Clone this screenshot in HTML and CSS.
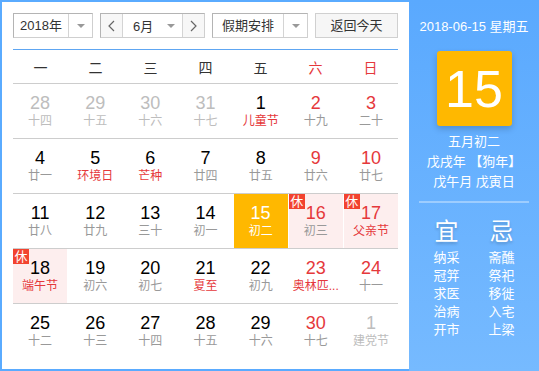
FILE: index.html
```html
<!DOCTYPE html>
<html lang="zh-CN">
<head>
  <meta charset="UTF-8">
  <title>万年历</title>
  <link rel="stylesheet" href="styles.css">
</head>
<body>
  <div class="calendar">
    <div class="main">
      <div class="toolbar">
        <div class="select year">
          <span class="select-text">2018年</span>
          <span class="select-btn"><i class="caret"></i></span>
        </div>
        <div class="select month">
          <span class="nav nav-prev">
            <svg width="7" height="12" viewBox="0 0 7 12"><polyline points="6,1 1,6 6,11" fill="none" stroke="#666" stroke-width="1.2"/></svg>
          </span>
          <span class="month-text">6月<i class="caret"></i></span>
          <span class="nav">
            <svg width="7" height="12" viewBox="0 0 7 12"><polyline points="1,1 6,6 1,11" fill="none" stroke="#666" stroke-width="1.2"/></svg>
          </span>
        </div>
        <div class="select holiday">
          <span class="select-text">假期安排</span>
          <span class="select-btn"><i class="caret"></i></span>
        </div>
        <div class="btn-today">返回今天</div>
      </div>

      <div class="weekdays">
        <span>一</span><span>二</span><span>三</span><span>四</span><span>五</span>
        <span class="red">六</span><span class="red">日</span>
      </div>

      <div class="week">
        <div class="day other"><span class="num">28</span><span class="lunar">十四</span></div>
        <div class="day other"><span class="num">29</span><span class="lunar">十五</span></div>
        <div class="day other"><span class="num">30</span><span class="lunar">十六</span></div>
        <div class="day other"><span class="num">31</span><span class="lunar">十七</span></div>
        <div class="day"><span class="num">1</span><span class="lunar fest">儿童节</span></div>
        <div class="day weekend"><span class="num">2</span><span class="lunar">十九</span></div>
        <div class="day weekend"><span class="num">3</span><span class="lunar">二十</span></div>
      </div>
      <div class="week">
        <div class="day"><span class="num">4</span><span class="lunar">廿一</span></div>
        <div class="day"><span class="num">5</span><span class="lunar fest">环境日</span></div>
        <div class="day"><span class="num">6</span><span class="lunar fest">芒种</span></div>
        <div class="day"><span class="num">7</span><span class="lunar">廿四</span></div>
        <div class="day"><span class="num">8</span><span class="lunar">廿五</span></div>
        <div class="day weekend"><span class="num">9</span><span class="lunar">廿六</span></div>
        <div class="day weekend"><span class="num">10</span><span class="lunar">廿七</span></div>
      </div>
      <div class="week">
        <div class="day"><span class="num">11</span><span class="lunar">廿八</span></div>
        <div class="day"><span class="num">12</span><span class="lunar">廿九</span></div>
        <div class="day"><span class="num">13</span><span class="lunar">三十</span></div>
        <div class="day"><span class="num">14</span><span class="lunar">初一</span></div>
        <div class="day today"><span class="num">15</span><span class="lunar">初二</span></div>
        <div class="day weekend rest"><b class="tag">休</b><span class="num">16</span><span class="lunar">初三</span></div>
        <div class="day weekend rest"><b class="tag">休</b><span class="num">17</span><span class="lunar fest">父亲节</span></div>
      </div>
      <div class="week">
        <div class="day rest"><b class="tag">休</b><span class="num">18</span><span class="lunar fest">端午节</span></div>
        <div class="day"><span class="num">19</span><span class="lunar">初六</span></div>
        <div class="day"><span class="num">20</span><span class="lunar">初七</span></div>
        <div class="day"><span class="num">21</span><span class="lunar fest">夏至</span></div>
        <div class="day"><span class="num">22</span><span class="lunar">初九</span></div>
        <div class="day weekend"><span class="num">23</span><span class="lunar fest" title="奥林匹克日">奥林匹...</span></div>
        <div class="day weekend"><span class="num">24</span><span class="lunar">十一</span></div>
      </div>
      <div class="week">
        <div class="day"><span class="num">25</span><span class="lunar">十二</span></div>
        <div class="day"><span class="num">26</span><span class="lunar">十三</span></div>
        <div class="day"><span class="num">27</span><span class="lunar">十四</span></div>
        <div class="day"><span class="num">28</span><span class="lunar">十五</span></div>
        <div class="day"><span class="num">29</span><span class="lunar">十六</span></div>
        <div class="day weekend"><span class="num">30</span><span class="lunar">十七</span></div>
        <div class="day other"><span class="num">1</span><span class="lunar">建党节</span></div>
      </div>
    </div>

    <aside class="side">
      <div class="side-date">2018-06-15 星期五</div>
      <div class="side-day">15</div>
      <div class="side-lunar">
        <p>五月初二</p>
        <p>戊戌年 【狗年】</p>
        <p>戊午月 戊寅日</p>
      </div>
      <div class="side-line"></div>
      <div class="yiji">
        <div class="yiji-col">
          <h3>宜</h3>
          <p>纳采</p><p>冠笄</p><p>求医</p><p>治病</p><p>开市</p>
        </div>
        <div class="yiji-col">
          <h3>忌</h3>
          <p>斋醮</p><p>祭祀</p><p>移徙</p><p>入宅</p><p>上梁</p>
        </div>
      </div>
    </aside>
  </div>
</body>
</html>
```

FILE: styles.css
```css
* {
  margin: 0;
  padding: 0;
  box-sizing: border-box;
}
body {
  font-family: "Liberation Sans", "Noto Sans CJK SC", sans-serif;
  color: #000;
}
.calendar {
  display: flex;
  width: 539px;
  height: 371px;
}

/* left part */
.main {
  width: 409px;
  height: 371px;
  border: 2px solid #5aabff;
  border-right: 0;
  padding: 11px 11px 0;
  background: #fff;
}
.toolbar {
  display: flex;
  justify-content: space-between;
  height: 25px;
  font-size: 13px;
  color: #333;
}
.select {
  display: flex;
  height: 25px;
  border: 1px solid #b4b4b4;
  border-right-color: #cfcfcf;
  border-bottom-color: #cfcfcf;
  background: #fff;
}
.select-text {
  display: flex;
  align-items: center;
  justify-content: center;
  border-right: 1px solid #d4d4d4;
  line-height: 23px;
}
.select-btn {
  display: flex;
  align-items: center;
  justify-content: center;
  width: 23px;
}
.caret {
  display: inline-block;
  width: 0;
  height: 0;
  border-left: 4px solid transparent;
  border-right: 4px solid transparent;
  border-top: 4px solid #999;
}
.year {
  width: 80px;
}
.year .select-text {
  width: 55px;
}
.holiday {
  width: 96px;
}
.holiday .select-text {
  width: 71px;
}
.month {
  width: 105px;
}
.nav {
  display: flex;
  align-items: center;
  justify-content: center;
  width: 21px;
  background: #f7f7f7;
}
.nav-prev {
  width: 22px;
  border-right: 1px solid #d4d4d4;
}
.month-text {
  display: flex;
  align-items: center;
  justify-content: space-between;
  width: 60px;
  padding: 0 7px 0 10px;
  border-right: 1px solid #d4d4d4;
}
.btn-today {
  width: 83px;
  height: 25px;
  border: 1px solid #d0d0d0;
  background: #f6f6f6;
  text-align: center;
  line-height: 23px;
}

.weekdays {
  display: grid;
  grid-template-columns: repeat(7, 1fr);
  height: 35px;
  margin-top: 11px;
  border-top: 1px solid #5ea6f2;
  border-bottom: 1px solid #cdcdcd;
  font-size: 14px;
  color: #333;
  text-align: center;
  align-items: center;
}
.weekdays .red {
  color: #e5383b;
}

.week {
  display: grid;
  grid-template-columns: repeat(7, 1fr);
  column-gap: 1px;
  height: 55px;
  border-bottom: 1px solid #cdcdcd;
}
.week:last-child {
  border-bottom: 0;
}
.day {
  position: relative;
  display: flex;
  flex-direction: column;
  align-items: center;
  justify-content: center;
  min-width: 0;
  padding-bottom: 1px;
}
.num {
  font-size: 18px;
  line-height: 20px;
}
.lunar {
  font-size: 12px;
  line-height: 16px;
  color: #999;
  white-space: nowrap;
}
.lunar.fest,
.weekend .num {
  color: #e5383b;
}
.other .num,
.other .lunar {
  color: #bdbdbd;
}
.rest {
  background: #fdeeee;
}
.today {
  background: #ffb800;
}
.today .num,
.today .lunar {
  color: #fff;
}
.tag {
  position: absolute;
  top: 0;
  left: 0;
  width: 16px;
  height: 15px;
  background: #f2432f;
  color: #fff;
  font-size: 13px;
  font-weight: normal;
  line-height: 15px;
  text-align: center;
}

/* right part */
.side {
  width: 130px;
  height: 371px;
  background: linear-gradient(#5aa9fe, #76baff);
  color: #fff;
  text-align: center;
}
.side-date {
  margin-top: 18px;
  font-size: 13px;
  line-height: 18px;
}
.side-day {
  width: 75px;
  height: 75px;
  margin: 15px auto 0;
  border-radius: 3px;
  background: #ffb800;
  box-shadow: 0 3px 6px rgba(0, 0, 0, 0.18);
  font-size: 52px;
  line-height: 76px;
}
.side-lunar {
  margin-top: 6px;
  font-size: 13px;
  line-height: 20px;
}
.side-line {
  width: 110px;
  height: 2px;
  margin: 9px auto 0;
  background: rgba(255, 255, 255, 0.35);
}
.yiji {
  display: grid;
  grid-template-columns: 55px 55px;
  justify-content: center;
  margin-top: 14px;
}
.yiji h3 {
  margin-bottom: 2px;
  font-size: 24px;
  font-weight: normal;
  line-height: 30px;
  text-shadow: 0 2px 3px rgba(0, 0, 0, 0.2);
}
.yiji p {
  font-size: 13px;
  line-height: 18px;
}
```
